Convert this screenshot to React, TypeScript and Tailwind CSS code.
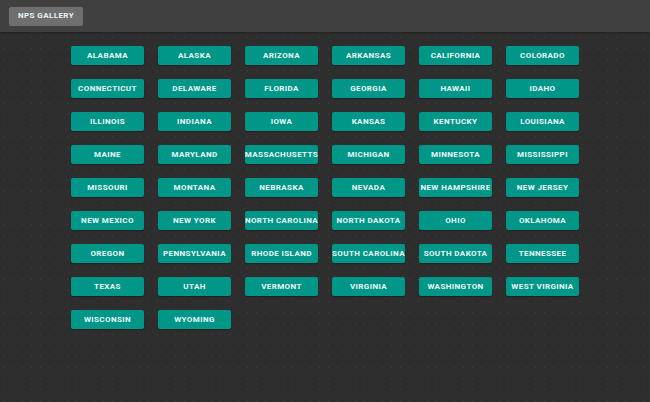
const STATES = [
  "Alabama", "Alaska", "Arizona", "Arkansas", "California", "Colorado",
  "Connecticut", "Delaware", "Florida", "Georgia", "Hawaii", "Idaho",
  "Illinois", "Indiana", "Iowa", "Kansas", "Kentucky", "Louisiana",
  "Maine", "Maryland", "Massachusetts", "Michigan", "Minnesota", "Mississippi",
  "Missouri", "Montana", "Nebraska", "Nevada", "New Hampshire", "New Jersey",
  "New Mexico", "New York", "North Carolina", "North Dakota", "Ohio", "Oklahoma",
  "Oregon", "Pennsylvania", "Rhode Island", "South Carolina", "South Dakota", "Tennessee",
  "Texas", "Utah", "Vermont", "Virginia", "Washington", "West Virginia",
  "Wisconsin", "Wyoming",
];

const StateButton = ({ name }: { name: string }) => {
  return (
    <button className="flex h-[19px] w-[73px] items-center justify-center whitespace-nowrap rounded-[2px] bg-[#009688] text-[8px] font-bold uppercase tracking-[0.4px] text-[#eefaf8] shadow-[0_1px_1px_rgba(0,0,0,0.3)]">
      {name}
    </button>
  );
};

export default function App() {
  return (
    <div className="flex min-h-screen flex-col bg-[#2e2e2e] font-['Roboto',sans-serif]">
      <header className="flex h-[32px] items-center bg-[#404040] px-[9px] shadow-[0_1px_2px_rgba(0,0,0,0.35)]">
        <button className="flex h-[19px] w-[74px] items-center justify-center rounded-[2px] bg-[#6f6f6f] text-[8px] font-bold uppercase tracking-[0.4px] text-[#e6f4f2]">
          NPS Gallery
        </button>
      </header>
      <main className="flex-1 bg-[radial-gradient(circle,rgba(255,255,255,0.09)_0.6px,transparent_0.8px)] bg-[size:9px_11px] pt-[14px]">
        <div className="mx-auto grid w-[508px] grid-cols-6 gap-x-[14px] gap-y-[14px]">
          {STATES.map((s) => (
            <StateButton key={s} name={s} />
          ))}
        </div>
      </main>
    </div>
  );
}
